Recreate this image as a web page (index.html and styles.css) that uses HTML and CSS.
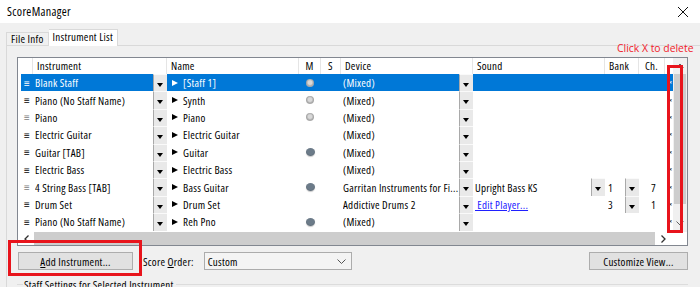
FILE: index.html
```html
<!DOCTYPE html>
<html lang="en">
<head>
  <meta charset="UTF-8">
  <title>ScoreManager</title>
  <link rel="stylesheet" href="styles.css">
</head>
<body>
  <div class="titlebar">
    <span>ScoreManager</span>
    <svg class="close" width="12" height="12" viewBox="0 0 12 12"><path d="M1 1L11 11M11 1L1 11" stroke="#111" stroke-width="1"/></svg>
  </div>

  <div class="tabs">
    <div class="tab">File Info</div>
    <div class="tab active">Instrument List</div>
  </div>

  <div class="panel">
    <div class="hint">Click X to delete</div>

    <div class="grid">
      <div class="grid-top">
        <div class="table">
          <div class="head">
            <div class="hc"></div>
            <div class="hc">Instrument</div>
            <div class="hc">Name</div>
            <div class="hc mid">M</div>
            <div class="hc mid">S</div>
            <div class="hc">Device</div>
            <div class="hc">Sound</div>
            <div class="hc">Bank</div>
            <div class="hc mid">Ch.</div>
            <div class="hc last"></div>
          </div>

          <div class="row sel">
            <div class="c h">≡</div>
            <div class="c inst"><span class="t">Blank Staff</span><span class="dd"></span></div>
            <div class="c name"><span class="arr"></span>[Staff 1]</div>
            <div class="c m"><span class="dot light"></span></div>
            <div class="c"></div>
            <div class="c dev"><span class="t">(Mixed)</span><span class="dd"></span></div>
            <div class="c"></div>
            <div class="c"></div>
            <div class="c"></div>
            <div class="c x">×</div>
          </div>

          <div class="row">
            <div class="c h">≡</div>
            <div class="c inst"><span class="t">Piano (No Staff Name)</span><span class="dd"></span></div>
            <div class="c name"><span class="arr"></span>Synth</div>
            <div class="c m"><span class="dot light"></span></div>
            <div class="c"></div>
            <div class="c dev"><span class="t">(Mixed)</span><span class="dd"></span></div>
            <div class="c"></div>
            <div class="c"></div>
            <div class="c"></div>
            <div class="c x">×</div>
          </div>

          <div class="row">
            <div class="c h dim">≡</div>
            <div class="c inst"><span class="t">Piano</span><span class="dd"></span></div>
            <div class="c name"><span class="arr"></span>Piano</div>
            <div class="c m"><span class="dot light"></span></div>
            <div class="c"></div>
            <div class="c dev"><span class="t">(Mixed)</span><span class="dd"></span></div>
            <div class="c"></div>
            <div class="c"></div>
            <div class="c"></div>
            <div class="c x">×</div>
          </div>

          <div class="row">
            <div class="c h">≡</div>
            <div class="c inst"><span class="t">Electric Guitar</span><span class="dd"></span></div>
            <div class="c name"><span class="arr"></span>Electric Guitar</div>
            <div class="c m"></div>
            <div class="c"></div>
            <div class="c dev"><span class="t">(Mixed)</span><span class="dd"></span></div>
            <div class="c"></div>
            <div class="c"></div>
            <div class="c"></div>
            <div class="c x">×</div>
          </div>

          <div class="row">
            <div class="c h">≡</div>
            <div class="c inst"><span class="t">Guitar [TAB]</span><span class="dd"></span></div>
            <div class="c name"><span class="arr"></span>Guitar</div>
            <div class="c m"><span class="dot dark"></span></div>
            <div class="c"></div>
            <div class="c dev"><span class="t">(Mixed)</span><span class="dd"></span></div>
            <div class="c"></div>
            <div class="c"></div>
            <div class="c"></div>
            <div class="c x">×</div>
          </div>

          <div class="row">
            <div class="c h">≡</div>
            <div class="c inst"><span class="t">Electric Bass</span><span class="dd"></span></div>
            <div class="c name"><span class="arr"></span>Electric Bass</div>
            <div class="c m"></div>
            <div class="c"></div>
            <div class="c dev"><span class="t">(Mixed)</span><span class="dd"></span></div>
            <div class="c"></div>
            <div class="c"></div>
            <div class="c"></div>
            <div class="c x">×</div>
          </div>

          <div class="row">
            <div class="c h dim">≡</div>
            <div class="c inst"><span class="t">4 String Bass [TAB]</span><span class="dd"></span></div>
            <div class="c name"><span class="arr"></span>Bass Guitar</div>
            <div class="c m"><span class="dot dark"></span></div>
            <div class="c"></div>
            <div class="c dev"><span class="t">Garritan Instruments for Fi...</span><span class="dd"></span></div>
            <div class="c snd"><span class="t">Upright Bass KS</span><span class="dd"></span></div>
            <div class="c bank"><span class="t">1</span><span class="dd"></span></div>
            <div class="c ch">7</div>
            <div class="c x">×</div>
          </div>

          <div class="row">
            <div class="c h">≡</div>
            <div class="c inst"><span class="t">Drum Set</span><span class="dd"></span></div>
            <div class="c name"><span class="arr"></span>Drum Set</div>
            <div class="c m"></div>
            <div class="c"></div>
            <div class="c dev"><span class="t">Addictive Drums 2</span><span class="dd"></span></div>
            <div class="c snd"><a class="link" href="#">&nbsp;Edit Player...</a></div>
            <div class="c bank"><span class="t">3</span><span class="dd"></span></div>
            <div class="c ch">1</div>
            <div class="c x">×</div>
          </div>

          <div class="row">
            <div class="c h">≡</div>
            <div class="c inst"><span class="t">Piano (No Staff Name)</span><span class="dd"></span></div>
            <div class="c name"><span class="arr"></span>Reh Pno</div>
            <div class="c m"><span class="dot dark"></span></div>
            <div class="c"></div>
            <div class="c dev"><span class="t">(Mixed)</span><span class="dd"></span></div>
            <div class="c"></div>
            <div class="c"></div>
            <div class="c"></div>
            <div class="c x">×</div>
          </div>
        </div>

        <div class="vscroll">
          <svg class="arrow" width="8" height="5" viewBox="0 0 8 5"><path d="M0.5 4.5L4 1L7.5 4.5" fill="none" stroke="#606060"/></svg>
          <div class="vthumb"></div>
          <svg class="arrow" width="8" height="5" viewBox="0 0 8 5"><path d="M0.5 0.5L4 4L7.5 0.5" fill="none" stroke="#606060"/></svg>
        </div>
      </div>

      <div class="hscroll">
        <div class="harrow"><svg width="5" height="8" viewBox="0 0 5 8"><path d="M4.5 0.5L1 4L4.5 7.5" fill="none" stroke="#303030" stroke-width="1.3"/></svg></div>
        <div class="hthumb"></div>
        <div class="harrow"><svg width="5" height="8" viewBox="0 0 5 8"><path d="M0.5 0.5L4 4L0.5 7.5" fill="none" stroke="#303030" stroke-width="1.3"/></svg></div>
        <div class="corner"></div>
      </div>

      <div class="callout-x"></div>
    </div>

    <div class="controls">
      <div class="add-wrap">
        <button class="btn add"><u>A</u>dd Instrument...</button>
        <div class="callout"></div>
      </div>
      <span class="label">Score <u>O</u>rder:</span>
      <div class="combo">
        <span>Custom</span>
        <svg width="9" height="5" viewBox="0 0 9 5"><path d="M0.5 0.5L4.5 4.5L8.5 0.5" fill="none" stroke="#555"/></svg>
      </div>
      <button class="btn customize">Customize View...</button>
    </div>

    <div class="group">
      <span class="seg"></span>
      <span class="legend">Staff Settings for Selected Instrument</span>
      <span class="line"></span>
    </div>
  </div>
</body>
</html>
```

FILE: styles.css
```css
* {
  box-sizing: border-box;
}
body {
  margin: 0;
  width: 700px;
  height: 287px;
  overflow: hidden;
  background: #f0f0f0;
  font-family: "Open Sans", "Liberation Sans", sans-serif;
  font-stretch: 75%;
  font-size: 11px;
  letter-spacing: 0.25px;
  color: #000;
}
.titlebar {
  height: 23px;
  background: #fff;
  display: flex;
  align-items: center;
  justify-content: space-between;
  padding: 0 11px 0 7px;
  font-size: 12px;
  letter-spacing: 0.35px;
}
.tabs {
  display: flex;
  align-items: flex-end;
  height: 22px;
  padding-left: 6px;
}
.tab {
  height: 13px;
  line-height: 12px;
  padding: 0 4px;
  border: 1px solid #d9d9d9;
  border-bottom: none;
  background: #f0f0f0;
}
.tab.active {
  height: 17px;
  line-height: 14px;
  margin-bottom: -1px;
  border-left: none;
  background: #fff;
  position: relative;
  z-index: 1;
}
.panel {
  position: relative;
  margin-left: 6px;
  border-left: 1px solid #d9d9d9;
  border-top: 1px solid #d9d9d9;
  padding: 11px 12px 0 10px;
  height: 242px;
}
.hint {
  position: absolute;
  left: 610px;
  top: -5px;
  color: #f0202a;
  font-size: 10.4px;
  font-stretch: 100%;
  letter-spacing: 0;
  white-space: nowrap;
}
.grid {
  position: relative;
  height: 189px;
  border: 1px solid #828790;
  background: #fff;
  display: flex;
  flex-direction: column;
}
.grid-top {
  flex: 1;
  display: flex;
  min-height: 0;
}
.table {
  flex: 1;
  display: flex;
  flex-direction: column;
  overflow: hidden;
}
.head, .row {
  display: grid;
  grid-template-columns: 15px 134px 132px 22px 20px 132px 132px 34px 26px 1fr;
}
.head {
  height: 16px;
  line-height: 16px;
}
.hc {
  padding-left: 4px;
  border-right: 1px solid #e5e5e5;
  white-space: nowrap;
}
.hc.mid {
  padding-left: 0;
  text-align: center;
}
.hc.last {
  border-right: none;
}
.row {
  height: 17.4px;
}
.row.sel {
  background: linear-gradient(90deg, #fff 3px, #0078d7 3px);
  color: #fff;
}
.c {
  display: flex;
  align-items: center;
  white-space: nowrap;
  overflow: hidden;
  min-width: 0;
}
.c .t {
  flex: 1;
  overflow: hidden;
}
.h {
  padding-left: 6px;
  font-size: 10px;
}
.h.dim {
  color: #808080;
}
.inst, .dev {
  padding-left: 2px;
}
.snd {
  padding-left: 2px;
}
.bank {
  padding-left: 3px;
}
.ch {
  justify-content: flex-end;
  padding-right: 9px;
}
.dd {
  position: relative;
  flex: none;
  width: 14px;
  height: 100%;
  background: #e9e9e9;
  border-left: 1px solid #a9a9a9;
  border-top: 1px solid #fafafa;
}
.dd::after {
  content: "";
  position: absolute;
  left: 3px;
  top: 8px;
  border-left: 3.5px solid transparent;
  border-right: 3.5px solid transparent;
  border-top: 4px solid #000;
}
.name {
  padding-left: 5px;
}
.arr {
  width: 0;
  height: 0;
  border-top: 3.5px solid transparent;
  border-bottom: 3.5px solid transparent;
  border-left: 6px solid currentColor;
  margin-right: 5px;
}
.m {
  justify-content: center;
}
.dot {
  width: 8px;
  height: 8px;
  border-radius: 50%;
}
.dot.light {
  background: radial-gradient(circle at 50% 45%, #d8d8d8 0 30%, #a4a4a4 60%, #bdbdbd 85%);
}
.dot.dark {
  width: 9px;
  background: radial-gradient(circle at 50% 40%, #6c7b89 0 50%, #56636f 80%);
  box-shadow: 0 1px 1px #c9c9c9;
}
.x {
  font-size: 7px;
  letter-spacing: 0;
  padding-left: 4px;
}
.link {
  color: #2020ff;
  text-decoration: underline;
}
.vscroll {
  width: 14px;
  background: #f0f0f0;
  display: flex;
  flex-direction: column;
  align-items: center;
  padding: 5px 0 6px;
}
.vscroll .arrow {
  flex: none;
}
.vthumb {
  width: 12px;
  height: 130px;
  margin: 6px 0 auto;
  background: #cdcdcd;
}
.hscroll {
  height: 13px;
  display: flex;
}
.harrow {
  width: 16px;
  display: flex;
  align-items: center;
  justify-content: center;
  flex: none;
}
.hthumb {
  flex: 1;
  background: #cdcdcd;
}
.corner {
  width: 16px;
  flex: none;
}
.callout-x {
  position: absolute;
  left: 649px;
  top: 7px;
  width: 16px;
  height: 168px;
  border: 3px solid #e8141c;
}
.controls {
  display: flex;
  align-items: center;
  margin-top: 6px;
  height: 18px;
}
.add-wrap {
  position: relative;
  margin-left: 1px;
}
.btn {
  height: 18px;
  padding: 0;
  border: 1px solid #adadad;
  background: #e1e1e1;
  font-family: inherit;
  font-stretch: inherit;
  font-size: inherit;
  letter-spacing: inherit;
  color: #000;
}
.btn.add {
  width: 115px;
  display: block;
}
.callout {
  position: absolute;
  left: -10px;
  top: -12px;
  width: 134px;
  height: 36px;
  border: 3px solid #e8141c;
}
.label {
  margin-left: 10px;
}
.combo {
  margin-left: 10px;
  width: 148px;
  height: 18px;
  border: 1px solid #acacac;
  background: #f4f4f4;
  display: flex;
  align-items: center;
  justify-content: space-between;
  padding: 0 5px 0 3px;
}
.btn.customize {
  margin-left: auto;
  width: 99px;
}
.group {
  display: flex;
  align-items: center;
  margin-top: 8px;
  line-height: 13px;
}
.seg {
  width: 6px;
  border-top: 1px solid #dcdcdc;
}
.legend {
  padding: 0 2px 0 1px;
}
.line {
  flex: 1;
  border-top: 1px solid #dcdcdc;
}
```
